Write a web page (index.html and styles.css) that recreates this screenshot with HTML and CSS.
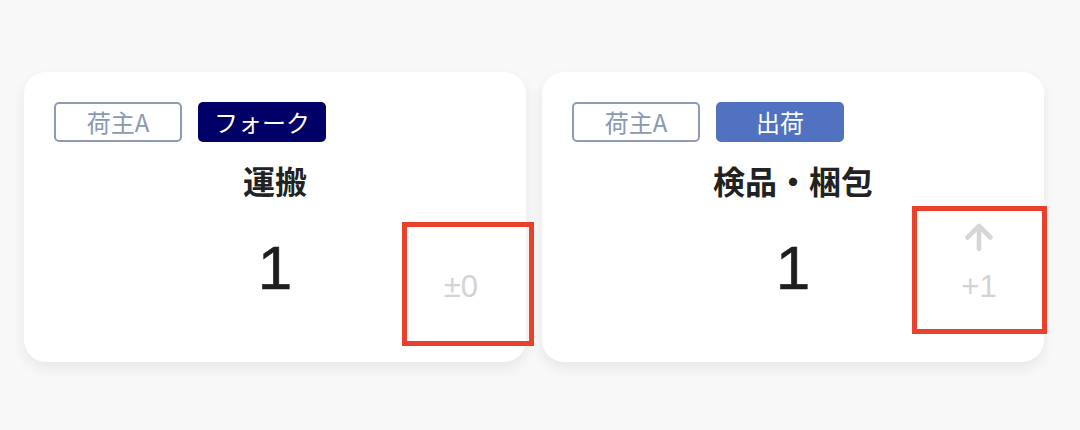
FILE: index.html
```html
<!DOCTYPE html>
<html lang="ja">
<head>
<meta charset="utf-8">
<link rel="stylesheet" href="styles.css">
</head>
<body>
<div class="board">
  <div class="card">
    <div class="tags">
      <span class="tag tag-owner">荷主A</span>
      <span class="tag tag-fork">フォーク</span>
    </div>
    <div class="title">運搬</div>
    <div class="stat">
      <div class="side"></div>
      <div class="value">1</div>
      <div class="side delta">
        <span class="arrow hidden"></span>
        <span class="diff">±0</span>
      </div>
    </div>
    <div class="mark mark-1"></div>
  </div>
  <div class="card">
    <div class="tags">
      <span class="tag tag-owner">荷主A</span>
      <span class="tag tag-ship">出荷</span>
    </div>
    <div class="title">検品・梱包</div>
    <div class="stat">
      <div class="side"></div>
      <div class="value">1</div>
      <div class="side delta">
        <svg class="arrow" viewBox="0 0 30 30" width="30" height="30"><path d="M15 27V4M3.5 15.5L15 4l11.5 11.5" fill="none" stroke="#d6d6d6" stroke-width="4.6" stroke-linecap="round" stroke-linejoin="round"/></svg>
        <span class="diff">+1</span>
      </div>
    </div>
    <div class="mark mark-2"></div>
  </div>
</div>
</body>
</html>
```

FILE: styles.css
```css
html, body {
  margin: 0;
  padding: 0;
  background: #f8f8f8;
}
body {
  font-family: "Noto Sans CJK JP", "Noto Sans", sans-serif;
  width: 1080px;
  height: 430px;
  overflow: hidden;
}
.board {
  display: flex;
  gap: 16px;
  padding: 72px 0 0 24px;
}
.card {
  position: relative;
  width: 502px;
  height: 290px;
  box-sizing: border-box;
  background: #ffffff;
  border-radius: 22px;
  box-shadow: 0 6px 14px rgba(0, 0, 0, 0.07);
  padding: 30px 30px 0 30px;
}
.tags {
  display: flex;
  gap: 16px;
}
.tag {
  box-sizing: border-box;
  width: 128px;
  height: 40px;
  border-radius: 5px;
  display: flex;
  align-items: center;
  justify-content: center;
  font-size: 24px;
  line-height: 1;
}
.tag-owner {
  border: 2px solid #8d9bb5;
  color: #8a98b2;
}
.tag-fork {
  background: #000066;
  color: #ffffff;
}
.tag-ship {
  background: #5072c0;
  color: #ffffff;
}
.title {
  margin-top: 18px;
  text-align: center;
  font-size: 32px;
  font-weight: 700;
  line-height: 40px;
  color: #222222;
}
.stat {
  display: grid;
  grid-template-columns: 70px 1fr 70px;
  margin-top: 18px;
}
.value {
  text-align: center;
  font-family: "Liberation Sans", Arial, sans-serif;
  font-size: 62px;
  line-height: 90px;
  color: #1e1e1e;
  padding-top: 5px;
  -webkit-text-stroke: 0.6px #1e1e1e;
}
.delta {
  display: flex;
  flex-direction: column;
  align-items: center;
}
.arrow {
  width: 30px;
  height: 30px;
  display: block;
  margin-top: 4px;
}
.arrow.hidden {
  visibility: hidden;
}
.diff {
  font-family: "Liberation Sans", Arial, sans-serif;
  font-size: 31px;
  line-height: 36px;
  color: #d3d3d3;
  margin-top: 17px;
}
.mark {
  position: absolute;
  border: 5px solid #e9412b;
  box-sizing: border-box;
}
.mark-1 {
  left: 378px;
  top: 150px;
  width: 132px;
  height: 124px;
}
.mark-2 {
  left: 370px;
  top: 134px;
  width: 135px;
  height: 128px;
}
```
